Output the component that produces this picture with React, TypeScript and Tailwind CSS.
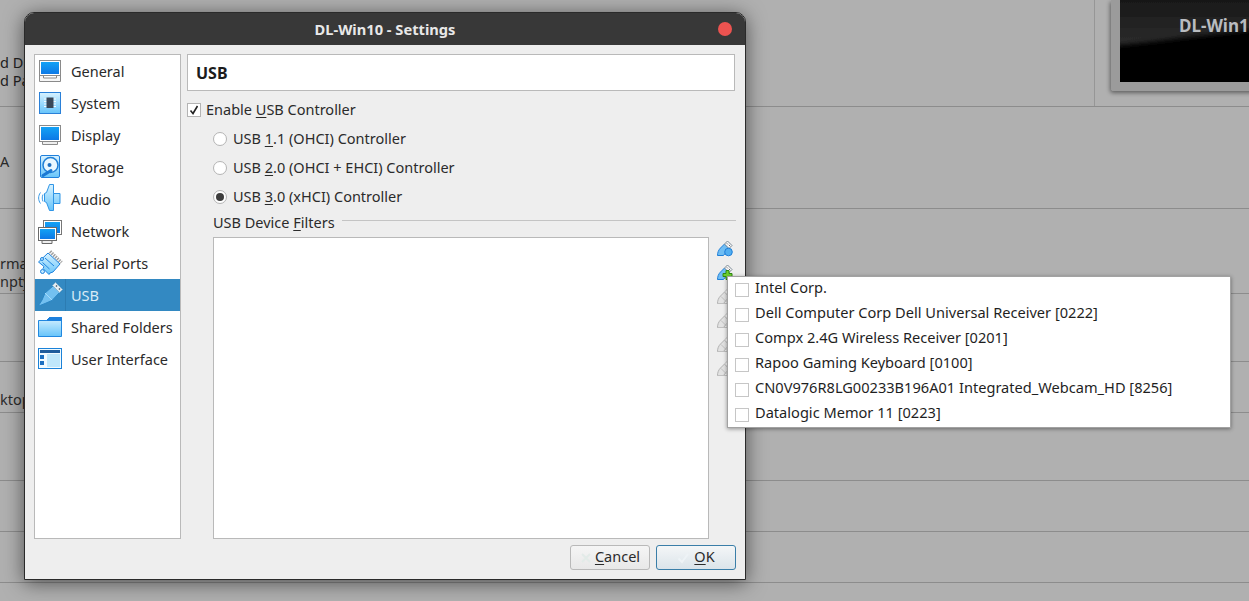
import React from "react";

const Screen = ({ x, y, w, h }: { x: number; y: number; w: number; h: number }) => (
  <rect x={x} y={y} width={w} height={h} fill="url(#screenG)" />
);

const icons: Record<string, React.ReactNode> = {
  General: (
    <>
      <path d="M2.500 20.500v6h21v-6h-4v2.500h-13v-2.500z" fill="#f6f6f6" stroke="#8a8a8a" />
      <rect x="2.500" y="5.500" width="21" height="15" fill="#fff" stroke="#8a8a8a" />
      <Screen x={4} y={7} w={18} h={12} />
    </>
  ),
  System: (
    <>
      <rect x="2.500" y="5.500" width="21" height="21" fill="url(#lightG)" stroke="#2a80d8" />
      <path d="M7 12h3M7 14.500h3M7 17h3M7 19.500h3M16 12h3M16 14.500h3M16 17h3M16 19.500h3" stroke="#f4fbff" />
      <rect x="9.500" y="10.500" width="7" height="10.500" fill="#3a4757" />
    </>
  ),
  Display: (
    <>
      <path d="M5.500 22v3.500h15V22" fill="#eee" stroke="#8a8a8a" />
      <rect x="2.500" y="6.500" width="21" height="16" fill="#fff" stroke="#8a8a8a" />
      <Screen x={4} y={8} w={18} h={13} />
    </>
  ),
  Storage: (
    <>
      <rect x="3.500" y="4.500" width="19" height="22" rx="1.500" fill="url(#lightG)" stroke="#2080dc" />
      <circle cx="13.500" cy="14" r="7.500" fill="#e9f7ff" stroke="#1f7fd6" strokeWidth="1.500" />
      <circle cx="12.500" cy="14" r="2" fill="#1f6fc0" />
      <path d="M6 24.500l8-5" stroke="#1a78d4" strokeWidth="3" strokeLinecap="round" />
    </>
  ),
  Audio: (
    <>
      <path d="M3.500 9.500c-2.500 3.500-2.500 7.500 0 11M6 11.500c-1 2-1 5 0 7" fill="none" stroke="#3b9be6" />
      <path d="M7.500 10.500l2-1 3-8h4v9h6.500v10h-6.500v7h-4l-3-8-2-1z" fill="url(#lightG)" stroke="#2f95e6" strokeLinejoin="round" />
      <path d="M16.500 10.500v10" stroke="#2f95e6" />
    </>
  ),
  Network: (
    <>
      <rect x="6.500" y="5.500" width="18" height="14" fill="#fff" stroke="#777" />
      <Screen x={8} y={7} w={15} h={11} />
      <path d="M5 25v3.500h10V25" fill="#eee" stroke="#6a6a6a" />
      <rect x="1.500" y="12.500" width="18" height="13" fill="#fff" stroke="#6a6a6a" />
      <Screen x={3} y={14} w={15} h={10} />
    </>
  ),
  "Serial Ports": (
    <>
      <path d="M13 4.500l11.500 11" stroke="#a0a0a0" strokeWidth="3.500" strokeDasharray="1.500 1" />
      <path d="M11 6l12 11-7 8-3 1-1 1.500-6-6 1-2L1.500 15z" fill="url(#lightG)" stroke="#1f84e0" strokeLinejoin="round" />
      <path d="M8 11l9 8M5.500 15.500l7 6.500" stroke="#1f84e0" />
      <circle cx="5.500" cy="24.500" r="2" fill="#bfe8ff" stroke="#1f84e0" />
      <circle cx="5" cy="12" r="1.500" fill="#bfe8ff" stroke="#1f84e0" />
    </>
  ),
  USB: (
    <>
      <path d="M3 26.500c-1 0-1-1-.5-1.500l2.500-4 3-7 8-7 6.500 6.500-7.500 8-7 3z" fill="#73c0f0" stroke="#2b86c4" />
      <path d="M15.500 6.500l3-3 7 7-3 3z" fill="#e6eef3" stroke="#8fb6cf" />
      <path d="M19 6.500l1 1M22 9.500l1 1" stroke="#4a5a66" strokeWidth="1.500" />
      <path d="M8 14l7 7" stroke="#a7dcfa" strokeWidth="1" />
    </>
  ),
  "Shared Folders": (
    <>
      <path d="M1.500 9.500V25.500h23V6.500h-12l-3 3z" fill="url(#lightG)" stroke="#2088e0" />
      <path d="M12.500 6.500h12v3h-15z" fill="#1c80dd" stroke="#1c80dd" />
    </>
  ),
  "User Interface": (
    <>
      <rect x="1.500" y="5.500" width="23" height="20" fill="#f0faff" stroke="#1b82d8" />
      <rect x="3" y="7" width="20" height="3" fill="#1e5c9c" />
      <rect x="10" y="11" width="13" height="13" fill="#bfe7fb" />
      <rect x="3" y="12" width="4" height="4" fill="#1b6fc0" />
      <rect x="3" y="18" width="4" height="4" fill="#1b6fc0" />
    </>
  ),
};

const navItems = [
  "General",
  "System",
  "Display",
  "Storage",
  "Audio",
  "Network",
  "Serial Ports",
  "USB",
  "Shared Folders",
  "User Interface",
];

const devices = [
  "Intel Corp.",
  "Dell Computer Corp Dell Universal Receiver [0222]",
  "Compx 2.4G Wireless Receiver [0201]",
  "Rapoo Gaming Keyboard [0100]",
  "CN0V976R8LG00233B196A01 Integrated_Webcam_HD [8256]",
  "Datalogic Memor 11 [0223]",
];

const Radio = ({ on, n, rest }: { on?: boolean; n: string; rest: string }) => (
  <div className="flex h-[29px] items-center pl-[26px]">
    <span className="flex h-[14px] w-[14px] shrink-0 items-center justify-center rounded-full border border-[#b4b4b4] bg-white">
      {on && <span className="h-[8px] w-[8px] rounded-full bg-[#3d3d3d]" />}
    </span>
    <span className="ml-[6px]">
      USB <u className="underline-offset-2">{n}</u>
      {rest}
    </span>
  </div>
);

const UsbTool = ({ kind }: { kind: "blue" | "add" | "grey" }) => {
  const grey = kind === "grey";
  const fill = grey ? "#e2e2e2" : "#6fbdf3";
  const line = grey ? "#b2b2b2" : "#1f7fd8";
  return (
    <svg width="18" height="18" viewBox="0 0 18 18" className="block">
      <path d="M1.500 16.500c0-3 1-5.500 3-7.500l4-4 5 5-4 4-2 2.500z" fill={fill} stroke={line} />
      <path d="M8.500 5l3-3 4.500 4.500-3 3z" fill="#f7f7f7" stroke={grey ? "#c0c0c0" : "#7d8b96"} />
      {!grey && <path d="M11 4.500l.8.8M13.300 6.300l.8.8" stroke="#333" />}
      {kind === "blue" && <circle cx="12.500" cy="13" r="3.800" fill="#52aef0" stroke="#1f7fd8" />}
      {kind === "add" && (
        <path d="M10 7.500h3v3h3v3h-3v3h-3v-3H7v-3h3z" fill="#6fd12e" stroke="#2e8a10" />
      )}
      {grey && <path d="M1.500 16.500h12M5 9.500l6 6" stroke="#c0c0c0" />}
    </svg>
  );
};

export default function App() {
  return (
    <div
      className="relative h-[601px] w-[1249px] overflow-hidden bg-[#b0b0b0] text-[14.5px] text-[#2b2b2b]"
      style={{ fontFamily: '"Noto Sans", sans-serif' }}
    >
      <svg className="absolute h-0 w-0">
        <defs>
          <linearGradient id="screenG" x1="0" y1="0" x2="0" y2="1">
            <stop offset="0" stopColor="#13a2f5" />
            <stop offset="1" stopColor="#0d78e6" />
          </linearGradient>
          <linearGradient id="lightG" x1="0" y1="0" x2="0" y2="1">
            <stop offset="0" stopColor="#d8f2ff" />
            <stop offset="1" stopColor="#66c4fa" />
          </linearGradient>
        </defs>
      </svg>

      {/* Main window behind the dialog */}
      <div className="flex h-[107px] border-b border-[#8c8c8c]">
        <div className="flex-1 pt-[53px] leading-[18px] text-[#222]">
          <div>d Dis</div>
          <div>d Pag</div>
        </div>
        <div className="w-[155px] border-l border-[#969696] pl-[16px]">
          <div className="h-[91px] w-[200px] rounded-bl-[3px] border-b-[9px] border-l-[9px] border-[#9b9b9b] shadow-[-1px_2px_4px_rgba(0,0,0,0.45)]">
            <div className="relative h-full overflow-hidden bg-black">
              <svg width="191" height="82" viewBox="0 0 191 82" className="block">
                <defs>
                  <linearGradient id="glare" x1="0" y1="0" x2="0" y2="1">
                    <stop offset="0" stopColor="#151515" />
                    <stop offset="1" stopColor="#2c2c2c" />
                  </linearGradient>
                  <filter id="soft">
                    <feGaussianBlur stdDeviation="2.500" />
                  </filter>
                </defs>
                <path d="M-8 -8H199V22C130 30 60 38 -8 46z" fill="url(#glare)" filter="url(#soft)" />
              </svg>
              <span className="absolute left-[59px] top-[13px] text-[17px] font-bold text-[#b9bcc0]">DL-Win1</span>
            </div>
          </div>
        </div>
      </div>
      <div className="flex h-[102px] items-center border-b border-[#8c8c8c] pt-[8px]">A</div>
      <div className="flex h-[85px] flex-col justify-end border-b border-[#8c8c8c] pb-[3px] leading-[18px]">
        <div>rmal</div>
        <div>npty</div>
      </div>
      <div className="h-[68px] border-b border-[#8c8c8c]" />
      <div className="flex h-[51px] items-end border-b border-[#8c8c8c] pb-[1px]">ktop</div>
      <div className="h-[68px] border-b border-[#8c8c8c]" />
      <div className="h-[51px] border-b border-[#8c8c8c]" />
      <div className="h-[51px] border-b border-[#8c8c8c]" />

      {/* Settings dialog */}
      <div className="absolute left-[24px] top-[12px] flex h-[568px] w-[722px] flex-col overflow-hidden rounded-t-[10px] border border-[#2a2a2a] bg-[#eeeeee] shadow-[0_3px_20px_rgba(0,0,0,0.55)]">
        <div className="relative flex h-[32px] shrink-0 items-center justify-center bg-[#383838] text-[14.67px] font-bold text-[#e8e8e8]">
          DL-Win10 - Settings
          <span className="absolute right-[13px] top-[9px] h-[14px] w-[14px] rounded-full bg-[#ec5350]" />
        </div>
        <div className="flex flex-1 pl-[9px] pr-[9px] pt-[9px]">
          <div className="h-[485px] w-[147px] shrink-0 border border-[#b9b9b9] bg-white">
            {navItems.map((n) => (
              <div
                key={n}
                className={
                  n === "USB"
                    ? "flex h-[32px] items-center bg-[#3389c2] text-[#d9ebf6]"
                    : "flex h-[32px] items-center"
                }
              >
                <span className={n === "USB" ? "h-full w-[31px] shrink-0 border-r border-[#2c7cb2] pl-[2px]" : "h-full w-[31px] shrink-0 pl-[2px]"}>
                  <svg width="28" height="32" viewBox="0 0 28 32" className="block">
                    {icons[n]}
                  </svg>
                </span>
                <span className="mt-[2px] pl-[5px]">{n}</span>
              </div>
            ))}
          </div>
          <div className="ml-[6px] flex min-w-0 flex-1 flex-col">
            <div className="flex h-[37px] w-[548px] items-center border border-[#b9b9b9] bg-white pl-[8px] text-[16px] font-bold text-[#1c1c1c]">
              USB
            </div>
            <div className="mt-[12px] flex h-[14px] items-center">
              <span className="flex h-[14px] w-[14px] shrink-0 items-center justify-center border border-[#b4b4b4] bg-white">
                <svg width="10" height="10" viewBox="0 0 10 10">
                  <path d="M1.500 5.500L4 8.500 8.500 1" fill="none" stroke="#222" strokeWidth="1.600" />
                </svg>
              </span>
              <span className="ml-[5px]">
                Enable <u className="underline-offset-2">U</u>SB Controller
              </span>
            </div>
            <div className="mt-[7px]">
              <Radio n="1" rest=".1 (OHCI) Controller" />
              <Radio n="2" rest=".0 (OHCI + EHCI) Controller" />
              <Radio on n="3" rest=".0 (xHCI) Controller" />
            </div>
            <div className="mt-[1px] flex h-[20px] items-center pl-[26px]">
              <span className="mt-[2px]">
                USB Device <u className="underline-offset-2">F</u>ilters
              </span>
              <span className="ml-[7px] mt-[-3px] h-px flex-1 bg-[#c4c4c4]" />
            </div>
            <div className="mt-[5px] flex pl-[26px]">
              <div className="h-[302px] w-[496px] border border-[#b9b9b9] bg-white" />
              <div className="ml-[7px] flex flex-col gap-[6px] pt-[2px]">
                <UsbTool kind="blue" />
                <UsbTool kind="add" />
                <UsbTool kind="grey" />
                <UsbTool kind="grey" />
                <UsbTool kind="grey" />
                <UsbTool kind="grey" />
              </div>
            </div>
            <div className="mt-[6px] flex justify-end gap-[6px]">
              <button className="flex h-[25px] w-[80px] items-center justify-center rounded-[3px] border border-[#b9b9b9] bg-gradient-to-b from-[#f5f5f5] to-[#e8e8e8]">
                <svg width="12" height="12" viewBox="0 0 12 12" className="mr-[3px]">
                  <path d="M2 2l8 8M10 2l-8 8" stroke="#e2ebe8" strokeWidth="2" />
                </svg>
                <span className="mt-[-2px]">
                  <u className="underline-offset-2">C</u>ancel
                </span>
              </button>
              <button className="flex h-[25px] w-[80px] items-center justify-center rounded-[3px] border border-[#3a7ea8] bg-gradient-to-b from-[#f4f6f7] to-[#dbe4ea]">
                <svg width="12" height="12" viewBox="0 0 12 12" className="mr-[5px]">
                  <path d="M1.500 6.500L5 10l6-8" fill="none" stroke="#eef3f6" strokeWidth="2" />
                </svg>
                <span className="mt-[-2px]">
                  <u className="underline-offset-2">O</u>K
                </span>
              </button>
            </div>
          </div>
        </div>
      </div>

      {/* Popup menu */}
      <div className="absolute left-[727px] top-[276px] w-[504px] border border-[#a2a2a2] bg-white text-[14.6px] text-[#1f1f1f] shadow-[0_1px_4px_rgba(0,0,0,0.4)]">
        {devices.map((d) => (
          <div key={d} className="flex h-[25px] items-center pl-[7px]">
            <span className="h-[14px] w-[14px] shrink-0 border border-[#c6c6c6] bg-white" />
            <span className="ml-[6px] mt-[-4px]">{d}</span>
          </div>
        ))}
      </div>
    </div>
  );
}
